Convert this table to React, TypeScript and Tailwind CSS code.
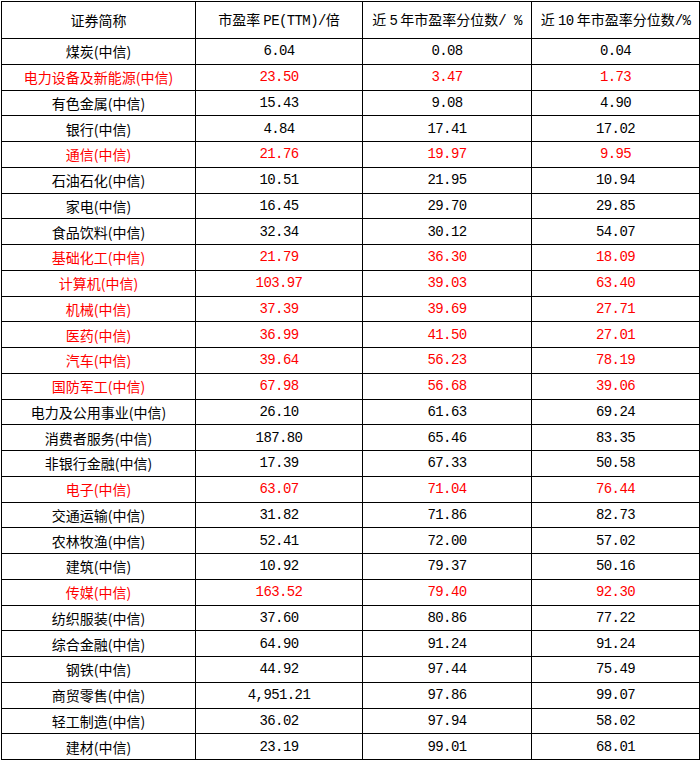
const rows: [string, string, string, string, boolean][] = [
  ['煤炭(中信)', '6.04', '0.08', '0.04', false],
  ['电力设备及新能源(中信)', '23.50', '3.47', '1.73', true],
  ['有色金属(中信)', '15.43', '9.08', '4.90', false],
  ['银行(中信)', '4.84', '17.41', '17.02', false],
  ['通信(中信)', '21.76', '19.97', '9.95', true],
  ['石油石化(中信)', '10.51', '21.95', '10.94', false],
  ['家电(中信)', '16.45', '29.70', '29.85', false],
  ['食品饮料(中信)', '32.34', '30.12', '54.07', false],
  ['基础化工(中信)', '21.79', '36.30', '18.09', true],
  ['计算机(中信)', '103.97', '39.03', '63.40', true],
  ['机械(中信)', '37.39', '39.69', '27.71', true],
  ['医药(中信)', '36.99', '41.50', '27.01', true],
  ['汽车(中信)', '39.64', '56.23', '78.19', true],
  ['国防军工(中信)', '67.98', '56.68', '39.06', true],
  ['电力及公用事业(中信)', '26.10', '61.63', '69.24', false],
  ['消费者服务(中信)', '187.80', '65.46', '83.35', false],
  ['非银行金融(中信)', '17.39', '67.33', '50.58', false],
  ['电子(中信)', '63.07', '71.04', '76.44', true],
  ['交通运输(中信)', '31.82', '71.86', '82.73', false],
  ['农林牧渔(中信)', '52.41', '72.00', '57.02', false],
  ['建筑(中信)', '10.92', '79.37', '50.16', false],
  ['传媒(中信)', '163.52', '79.40', '92.30', true],
  ['纺织服装(中信)', '37.60', '80.86', '77.22', false],
  ['综合金融(中信)', '64.90', '91.24', '91.24', false],
  ['钢铁(中信)', '44.92', '97.44', '75.49', false],
  ['商贸零售(中信)', '4,951.21', '97.86', '99.07', false],
  ['轻工制造(中信)', '36.02', '97.94', '58.02', false],
  ['建材(中信)', '23.19', '99.01', '68.01', false],
];

const cjk = "font-['Noto_Sans_CJK_SC',sans-serif]";
const mono = "font-['Liberation_Mono','Noto_Sans_CJK_SC',monospace] tracking-[-0.6px]";

export default function App() {
  return (
    <div className="bg-white w-[700px] h-[761px] pt-px pl-px">
      <table className="table-fixed border-collapse w-[698px] text-[14px] leading-none text-black">
        <colgroup>
          <col className="w-[194px]" />
          <col className="w-[167px]" />
          <col className="w-[169px]" />
          <col className="w-[168px]" />
        </colgroup>
        <thead>
          <tr className="h-[37px]">
            <th className={`border border-black font-normal ${cjk}`}>证券简称</th>
            <th className={`border border-black font-normal ${cjk}`}>
              市盈率 <span className={mono}>PE(TTM)/</span>倍
            </th>
            <th className={`border border-black font-normal ${cjk}`}>
              近 <span className={mono}>5</span> 年市盈率分位数<span className={mono}>/ %</span>
            </th>
            <th className={`border border-black font-normal ${cjk}`}>
              近 <span className={mono}>10</span> 年市盈率分位数<span className={mono}>/%</span>
            </th>
          </tr>
        </thead>
        <tbody>
          {rows.map(([name, pe, p5, p10, red], i) => (
            <tr key={i} className={`h-[25.75px] ${red ? 'text-[#ff0000]' : 'text-black'}`}>
              <td className={`border border-black text-center ${cjk}`}>{name}</td>
              <td className={`border border-black text-center ${mono}`}>{pe}</td>
              <td className={`border border-black text-center ${mono}`}>{p5}</td>
              <td className={`border border-black text-center ${mono}`}>{p10}</td>
            </tr>
          ))}
        </tbody>
      </table>
    </div>
  );
}
